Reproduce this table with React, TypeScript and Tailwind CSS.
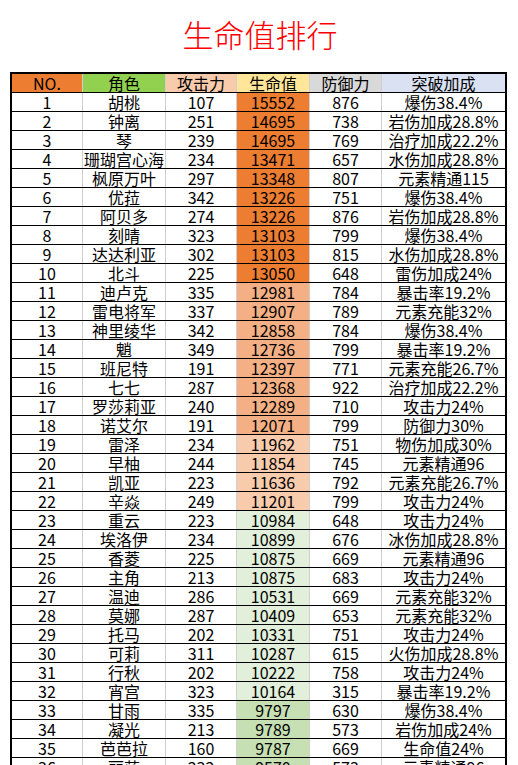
import React from "react";

type Row = [number, string, number, number, number, string];

const rows: Row[] = [
  [1, "胡桃", 107, 15552, 876, "爆伤38.4%"],
  [2, "钟离", 251, 14695, 738, "岩伤加成28.8%"],
  [3, "琴", 239, 14695, 769, "治疗加成22.2%"],
  [4, "珊瑚宫心海", 234, 13471, 657, "水伤加成28.8%"],
  [5, "枫原万叶", 297, 13348, 807, "元素精通115"],
  [6, "优菈", 342, 13226, 751, "爆伤38.4%"],
  [7, "阿贝多", 274, 13226, 876, "岩伤加成28.8%"],
  [8, "刻晴", 323, 13103, 799, "爆伤38.4%"],
  [9, "达达利亚", 302, 13103, 815, "水伤加成28.8%"],
  [10, "北斗", 225, 13050, 648, "雷伤加成24%"],
  [11, "迪卢克", 335, 12981, 784, "暴击率19.2%"],
  [12, "雷电将军", 337, 12907, 789, "元素充能32%"],
  [13, "神里绫华", 342, 12858, 784, "爆伤38.4%"],
  [14, "魈", 349, 12736, 799, "暴击率19.2%"],
  [15, "班尼特", 191, 12397, 771, "元素充能26.7%"],
  [16, "七七", 287, 12368, 922, "治疗加成22.2%"],
  [17, "罗莎莉亚", 240, 12289, 710, "攻击力24%"],
  [18, "诺艾尔", 191, 12071, 799, "防御力30%"],
  [19, "雷泽", 234, 11962, 751, "物伤加成30%"],
  [20, "早柚", 244, 11854, 745, "元素精通96"],
  [21, "凯亚", 223, 11636, 792, "元素充能26.7%"],
  [22, "辛焱", 249, 11201, 799, "攻击力24%"],
  [23, "重云", 223, 10984, 648, "攻击力24%"],
  [24, "埃洛伊", 234, 10899, 676, "冰伤加成28.8%"],
  [25, "香菱", 225, 10875, 669, "元素精通96"],
  [26, "主角", 213, 10875, 683, "攻击力24%"],
  [27, "温迪", 286, 10531, 669, "元素充能32%"],
  [28, "莫娜", 287, 10409, 653, "元素充能32%"],
  [29, "托马", 202, 10331, 751, "攻击力24%"],
  [30, "可莉", 311, 10287, 615, "火伤加成28.8%"],
  [31, "行秋", 202, 10222, 758, "攻击力24%"],
  [32, "宵宫", 323, 10164, 315, "暴击率19.2%"],
  [33, "甘雨", 335, 9797, 630, "爆伤38.4%"],
  [34, "凝光", 213, 9789, 573, "岩伤加成24%"],
  [35, "芭芭拉", 160, 9787, 669, "生命值24%"],
  [36, "丽莎", 232, 9570, 573, "元素精通96"],
];

function hpClass(n: number): string {
  if (n <= 10) return "bg-[#ED7D31]";
  if (n <= 18) return "bg-[#F4B084]";
  if (n <= 22) return "bg-[#F8CBAD]";
  if (n <= 32) return "bg-[#E2EFDA]";
  return "bg-[#C6E0B4]";
}

const cols = "grid grid-cols-[71px_83px_71px_73px_72px_123px]";
const cell = "h-[18px] flex items-center justify-center leading-[18px] border-r border-[#cfcfcf] whitespace-nowrap overflow-visible";

export default function App() {
  return (
    <div
      className="w-[518px] min-h-[765px] bg-white text-black"
      style={{ fontFamily: '"Noto Sans CJK SC", "Noto Sans", sans-serif' }}
    >
      <div className="h-[72px] flex justify-center pt-[13px]">
        <div className="text-[31px] leading-[42px] text-[#FF0000] font-light tracking-[0px] pl-[2px]">
          生命值排行
        </div>
      </div>
      <div className="ml-[10px] w-[497px] border-2 border-black border-b-0 text-[16px]">
        <div className={`${cols} border-b border-black`}>
          <div className={`${cell} bg-[#ED7D31] border-[#9a9a9a]`}>NO.</div>
          <div className={`${cell} bg-[#92D050] border-[#9a9a9a]`}>角色</div>
          <div className={`${cell} bg-[#F8CBAD] border-[#9a9a9a]`}>攻击力</div>
          <div className={`${cell} bg-[#FFE699] border-[#9a9a9a]`}>生命值</div>
          <div className={`${cell} bg-[#D9D9D9] border-[#9a9a9a]`}>防御力</div>
          <div className={`${cell} bg-[#D9E1F2] border-r-0`}>突破加成</div>
        </div>
        {rows.map((r) => (
          <div key={r[0]} className={`${cols} border-b border-black`}>
            <div className={cell}>{r[0]}</div>
            <div className={cell}>{r[1]}</div>
            <div className={cell}>{r[2]}</div>
            <div className={`${cell} ${hpClass(r[0])}`}>{r[3]}</div>
            <div className={cell}>{r[4]}</div>
            <div className={`${cell} border-r-0`}>{r[5]}</div>
          </div>
        ))}
      </div>
    </div>
  );
}
